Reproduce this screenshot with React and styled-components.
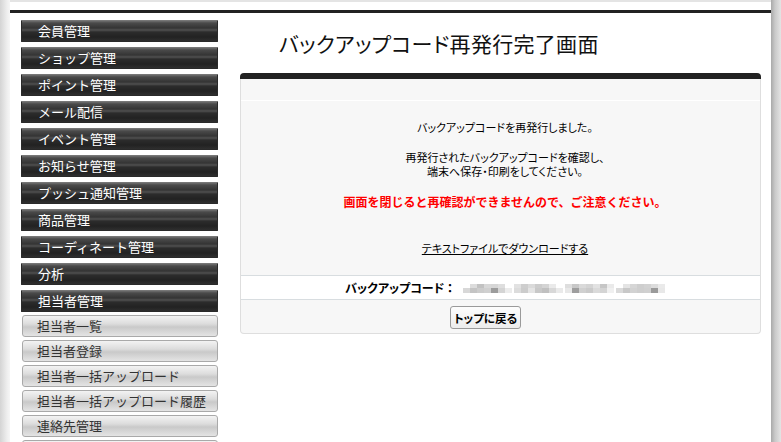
import React from "react";
import styled, { createGlobalStyle } from "styled-components";

const Global = createGlobalStyle`
  html, body { margin: 0; padding: 0; background: #fff; }
  body { font-family: "Noto Sans CJK JP", "Noto Sans", sans-serif; }
`;

const Page = styled.div`
  display: flex;
  width: 781px;
  height: 442px;
  overflow: hidden;
  background: #fff;
`;

const ShadowLeft = styled.div`
  width: 10px;
  flex: none;
  background: linear-gradient(to right, #d4d4d4, #eeeeee 70%, #f6f6f6);
`;

const ShadowRight = styled.div`
  width: 10px;
  flex: none;
  background: linear-gradient(to right, #a9a9a9, #c9c9c9 40%, #e4e4e4);
`;

const Frame = styled.div`
  flex: 1;
  min-height: 0;
  display: flex;
  flex-direction: column;
  background: #fff;
  overflow: hidden;
`;

const TopStrip = styled.div`
  flex: none;
  height: 2px;
  background: #e4e4e4;
  margin-bottom: 8px;
`;

const TopBar = styled.div`
  flex: none;
  height: 3px;
  background: #222;
`;

const Body = styled.div`
  display: flex;
  flex: none;
`;

const Sidebar = styled.nav`
  width: 197px;
  flex: none;
  margin-left: 11px;
  padding-top: 7px;
  display: flex;
  flex-direction: column;
  gap: 3px;
`;

const MenuList = styled.div`
  display: flex;
  flex-direction: column;
  gap: ${(p) => p.$gap}px;
`;

const MainItem = styled.div`
  flex: none;
  height: 20px;
  line-height: 20px;
  padding-left: 16px;
  color: #fff;
  font-size: 13px;
  border: 1px solid #2a2a2a;
  border-top-color: #777;
  border-radius: 1px;
  background: linear-gradient(
    #6e6e6e 0,
    #4a4a4a 2px,
    #343434 7px,
    #505050 9px,
    #2c2c2c 11px,
    #222 16px,
    #2e2e2e 100%
  );
  white-space: nowrap;
`;

const SubItem = styled.div`
  flex: none;
  height: 20px;
  line-height: 20px;
  margin-left: 1px;
  padding-left: 14px;
  color: #333;
  font-size: 13px;
  border: 1px solid #a9a9a9;
  border-radius: 3px;
  background: linear-gradient(#f3f3f3 0, #dcdcdc 40%, #c9c9c9 55%, #d8d8d8 80%, #e4e4e4 100%);
  white-space: nowrap;
`;

const Main = styled.main`
  flex: 1;
  margin-left: 22px;
  margin-right: 10px;
  display: flex;
  flex-direction: column;
`;

const Title = styled.h1`
  margin: 0;
  padding: 15px 0 0 39px;
  height: 45px;
  line-height: 30px;
  font-size: 21px;
  font-weight: normal;
  color: #111;
  font-feature-settings: "palt";
  letter-spacing: 0.3px;
`;

const Panel = styled.section`
  background: #f7f7f7;
  border: 1px solid #dedede;
  border-top: none;
  border-radius: 5px 5px 4px 4px;
  font-size: 11px;
  line-height: 14px;
  color: #000;
  text-align: center;
  font-feature-settings: "palt";
  padding-bottom: 4px;
`;

const PanelBar = styled.div`
  height: 6px;
  background: #222;
  border-radius: 4px 4px 0 0;
  margin: 0 -1px;
`;

const PanelHead = styled.div`
  height: 21px;
  border-bottom: 1px solid #fff;
`;

const Content = styled.div`
  padding-top: 19px;
  padding-left: 9px;
`;

const Para = styled.p`
  margin: 0 0 ${(p) => p.$gap}px;
  color: #000;
`;

const Alert = styled.p`
  margin: 0 0 ${(p) => p.$gap}px;
  color: #ff0000;
  font-weight: bold;
  font-size: 12px;
  font-feature-settings: normal;
`;

const DownloadLink = styled.a`
  color: #000;
  text-decoration: underline;
  cursor: pointer;
`;

const CodeRow = styled.div`
  background: #fff;
  border-top: 1px solid #d8dde0;
  border-bottom: 1px solid #d8dde0;
  height: 23px;
  display: flex;
  align-items: center;
  justify-content: center;
  gap: 10px;
  margin-top: 20px;
  padding-left: 9px;
`;

const CodeLabel = styled.span`
  font-weight: bold;
  font-size: 12px;
`;

const CodeGroups = styled.div`
  display: flex;
  gap: 2px;
  margin-top: 1px;
`;

const CodeGroup = styled.div`
  display: grid;
  grid-template-columns: repeat(7, 7px);
  grid-auto-rows: 4.5px;
`;

const Cell = styled.span`
  display: block;
`;

const ButtonRow = styled.div`
  padding-top: 6px;
  padding-right: 30px;
  display: flex;
  justify-content: center;
`;

const Button = styled.button`
  height: 23px;
  padding: 0 3px;
  font-family: "Noto Sans CJK JP", sans-serif;
  font-size: 11.5px;
  font-weight: bold;
  font-feature-settings: "palt";
  color: #000;
  background: linear-gradient(#fdfdfd, #ececec);
  border: 1px solid #9a9a9a;
  border-radius: 3px;
`;

const mainMenu = [
  "会員管理",
  "ショップ管理",
  "ポイント管理",
  "メール配信",
  "イベント管理",
  "お知らせ管理",
  "プッシュ通知管理",
  "商品管理",
  "コーディネート管理",
  "分析",
  "担当者管理",
];

const subMenu = [
  "担当者一覧",
  "担当者登録",
  "担当者一括アップロード",
  "担当者一括アップロード履歴",
  "連絡先管理",
  "",
];

const codePattern = [
  ["#fff", "#dcdcdc", "#c2c2c2", "#d8d8d8", "#d6d6d6", "#dedede", "#fff",
   "#d8d8d8", "#c4c4c4", "#cccccc", "#d0d0d0", "#9c9c9c", "#d4d4d4", "#ececec"],
  ["#e2e2e2", "#cecece", "#dadada", "#cccccc", "#d4d4d4", "#eaeaea", "#fff",
   "#dcdcdc", "#cccccc", "#e4e4e4", "#c8c8c8", "#c0c0c0", "#d8d8d8", "#eaeaea"],
  ["#dedede", "#c8c8c8", "#dadada", "#d4d4d4", "#e2e2e2", "#c6c6c6", "#eaeaea",
   "#e8e8e8", "#9e9e9e", "#d0d0d0", "#cacaca", "#dadada", "#d4d4d4", "#f0f0f0"],
  ["#fff", "#e4e4e4", "#d6d6d6", "#cecece", "#d2d2d2", "#dcdcdc", "#eaeaea",
   "#dadada", "#c8c8c8", "#d2d2d2", "#cecece", "#d0d0d0", "#9a9a9a", "#e8e8e8"],
];

export default function App() {
  return (
    <>
      <Global />
      <Page>
        <ShadowLeft />
        <Frame>
          <TopStrip />
          <TopBar />
          <Body>
            <Sidebar>
              <MenuList $gap={5}>
                {mainMenu.map((m) => (
                  <MainItem key={m}>{m}</MainItem>
                ))}
              </MenuList>
              <MenuList $gap={3}>
                {subMenu.map((m, i) => (
                  <SubItem key={i}>{m}</SubItem>
                ))}
              </MenuList>
            </Sidebar>
            <Main>
              <Title>バックアップコード再発行完了画面</Title>
              <Panel>
                <PanelBar />
                <PanelHead />
                <Content>
                  <Para $gap={16}>バックアップコードを再発行しました。</Para>
                  <Para $gap={17}>
                    再発行されたバックアップコードを確認し、
                    <br />
                    端末へ保存・印刷をしてください。
                  </Para>
                  <Alert $gap={32}>
                    画面を閉じると再確認ができませんので、ご注意ください。
                  </Alert>
                  <Para $gap={0}>
                    <DownloadLink>テキストファイルでダウンロードする</DownloadLink>
                  </Para>
                </Content>
                <CodeRow>
                  <CodeLabel>バックアップコード ：</CodeLabel>
                  <CodeGroups>
                    {codePattern.map((g, gi) => (
                      <CodeGroup key={gi}>
                        {g.map((c, ci) => (
                          <Cell key={ci} style={{ background: c }} />
                        ))}
                      </CodeGroup>
                    ))}
                  </CodeGroups>
                </CodeRow>
                <ButtonRow>
                  <Button>トップに戻る</Button>
                </ButtonRow>
              </Panel>
            </Main>
          </Body>
        </Frame>
        <ShadowRight />
      </Page>
    </>
  );
}
